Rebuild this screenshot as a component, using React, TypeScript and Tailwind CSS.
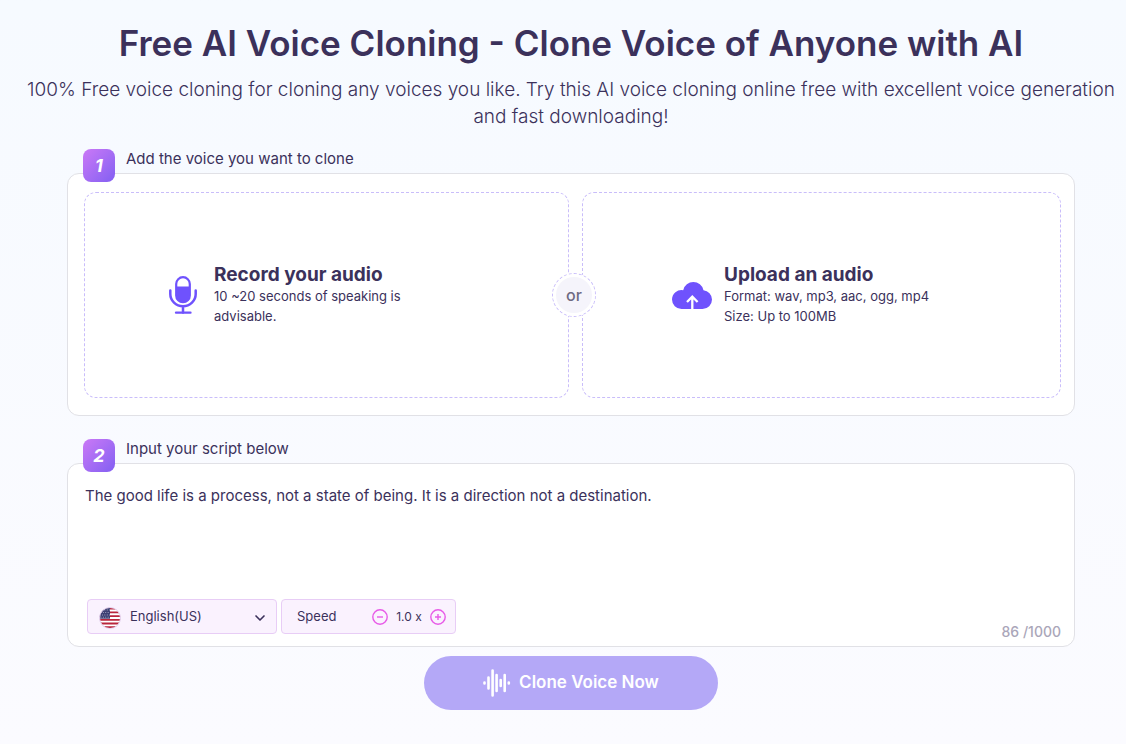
import { useState, type ReactNode } from 'react';
import { ChevronDown } from 'lucide-react';

const MAX_CHARS = 1000;

function MicIcon() {
  return (
    <svg viewBox="0 0 28 38" className="w-7 h-[38px] shrink-0" fill="none" stroke="#6f52fd" strokeLinecap="round">
      <rect x="7.2" y="1.2" width="13.6" height="25" rx="6.8" strokeWidth="2.2" />
      <path d="M7.2 10.5h13.600v8.900a6.800 6.800 0 0 1-13.600 0z" fill="#6f52fd" stroke="none" />
      <path d="M1.300 14.500V18a12.700 12.200 0 0 0 25.400 0v-3.500M14 30.500v6" strokeWidth="2.500" />
      <path d="M7 36.700h14.500" strokeWidth="2.300" />
    </svg>
  );
}

function CloudIcon() {
  return (
    <svg viewBox="0 0 40 32" className="w-10 h-8 shrink-0" fill="none">
      <path
        d="M9.500 30A9.500 9.500 0 0 1 0 20.500a9.500 9.500 0 0 1 11.200-9.300A10.400 10.400 0 0 1 31.500 11.200 9.500 9.500 0 0 1 40 20.500a9.500 9.500 0 0 1-9.500 9.500z"
        fill="#6f52fd"
      />
      <path d="M20.300 30V18.500M15 23l5.300-5.300 5.300 5.300" stroke="#fff" strokeWidth="2.300" />
    </svg>
  );
}

function WaveIcon() {
  return (
    <svg viewBox="0 0 28 28" className="w-7 h-7" stroke="currentColor" strokeWidth="2.600" strokeLinecap="round">
      <path d="M1.500 13.500v1M5.500 8.500v11M9.600 1.500v25M13.600 6v16M17.700 11v6M21.700 6v16M25.800 13.500v1" />
    </svg>
  );
}

function FlagIcon() {
  return (
    <svg viewBox="0 0 22 22" className="w-[22px] h-[22px]">
      <clipPath id="flag-circle">
        <circle cx="11" cy="11" r="10.500" />
      </clipPath>
      <g clipPath="url(#flag-circle)">
        <rect width="22" height="22" fill="#fff" />
        <path
          d="M0 1.700h22M0 5.400h22M0 9.100h22M0 12.800h22M0 16.500h22M0 20.200h22"
          stroke="#b9253c"
          strokeWidth="1.800"
        />
        <rect width="11" height="11.700" fill="#3d3f73" />
        <path
          d="M3 3h8M1.500 5.500h9M3 8h8M1.500 10.200h9"
          stroke="#c9cade"
          strokeWidth="0.800"
          strokeDasharray="0.900 1.500"
        />
      </g>
      <circle cx="11" cy="11" r="10.500" fill="none" stroke="#e3d3ef" />
    </svg>
  );
}

function StepHeader({ step, children }: { step: number; children: ReactNode }) {
  return (
    <div className="relative z-10 flex items-start gap-[11px] ml-4 -mb-[9px]">
      <span className="w-8 h-[33px] flex items-center justify-center rounded-lg bg-linear-to-br from-[#cb78f6] to-[#835ff2] text-white text-lg font-bold italic">
        {step}
      </span>
      {children}
    </div>
  );
}

function SourceButton({ icon, title, lines }: { icon: ReactNode; title: string; lines: string[] }) {
  return (
    <button
      type="button"
      className="h-[206px] flex items-center gap-[17px] rounded-xl border border-dashed border-[#c9bdfa] text-left cursor-pointer"
    >
      {icon}
      <span className="flex flex-col">
        <span className="text-[19px] leading-[22px] font-bold">{title}</span>
        {lines.map((line) => (
          <span key={line} className="text-[13px] leading-5">
            {line}
          </span>
        ))}
      </span>
    </button>
  );
}

function SpeedButton({ label, path, onClick }: { label: string; path: string; onClick: () => void }) {
  return (
    <button type="button" aria-label={label} onClick={onClick} className="text-[#e85be8] cursor-pointer">
      <svg viewBox="0 0 16 16" className="w-4 h-4" fill="none" stroke="currentColor" strokeWidth="1.400">
        <circle cx="8" cy="8" r="7.200" />
        <path d={path} />
      </svg>
    </button>
  );
}

export default function App() {
  const [script, setScript] = useState(
    'The good life is a process, not a state of being. It is a direction not a destination.'
  );
  const [speed, setSpeed] = useState(1);

  return (
    <main className="min-h-screen pl-4 pt-4 pb-8 bg-linear-to-b from-[#f6faff] to-[#fbfbff] font-['Inter',sans-serif] text-[#3b315b]">
      <header className="px-2 text-center">
        <h1 className="text-[35px] leading-[54px] font-semibold">
          Free AI Voice Cloning - Clone Voice of Anyone with AI
        </h1>
        <p className="mt-[6px] text-[19px] leading-[27px] font-light">
          100% Free voice cloning for cloning any voices you like. Try this AI voice cloning online free with excellent
          voice generation and fast downloading!
        </p>
      </header>

      <div className="mx-[51px] mt-[19px]">
        <section>
          <StepHeader step={1}>
            <h2 className="text-[15px] leading-5">Add the voice you want to clone</h2>
          </StepHeader>
          <div className="relative grid grid-cols-[485fr_479fr] gap-[13px] pt-[18px] pb-[17px] pl-4 pr-[13px] bg-white border border-[#e1e1e6] rounded-xl">
            <div className="grid *:pl-[84px]">
              <SourceButton
                icon={<MicIcon />}
                title="Record your audio"
                lines={['10 ~20 seconds of speaking is', 'advisable.']}
              />
            </div>
            <div className="grid *:pl-[89px] *:gap-3">
              <SourceButton
                icon={<CloudIcon />}
                title="Upload an audio"
                lines={['Format: wav, mp3, aac, ogg, mp4', 'Size: Up to 100MB']}
              />
            </div>
            <span className="absolute left-1/2 top-1/2 ml-[3px] -translate-x-1/2 -translate-y-1/2 w-11 h-11 p-[3px] rounded-full border border-dashed border-[#c9bdfa] bg-white">
              <span className="w-full h-full flex items-center justify-center rounded-full bg-[#f5f4fb] text-[#6f6a83] text-base font-medium">
                or
              </span>
            </span>
          </div>
        </section>

        <section className="mt-[23px]">
          <StepHeader step={2}>
            <label htmlFor="script" className="text-[15px] leading-5">
              Input your script below
            </label>
          </StepHeader>
          <div className="pt-[22px] pb-3 pl-[17px] pr-[13px] bg-white border border-[#e1e1e6] rounded-xl">
            <textarea
              id="script"
              value={script}
              maxLength={MAX_CHARS}
              onChange={(e) => setScript(e.target.value)}
              className="block w-full h-[113px] resize-none outline-none text-[15px] leading-5"
            />
            <div className="flex gap-1 pl-[2px]">
              <div className="relative">
                <select
                  aria-label="Language"
                  className="w-[190px] h-[35px] pl-[42px] appearance-none rounded-sm border border-[#e8cdf6] bg-[#faf2fe] text-[13px]"
                >
                  <option>English(US)</option>
                </select>
                <span className="absolute left-3 top-2 pointer-events-none">
                  <FlagIcon />
                </span>
                <ChevronDown className="absolute right-[9px] top-[11px] w-4 h-4 pointer-events-none" strokeWidth={2.5} />
              </div>
              <div className="w-[175px] h-[35px] flex items-center pl-[15px] pr-[9px] rounded-sm border border-[#e8cdf6] bg-[#faf2fe] text-[13px]">
                <span className="mr-auto">Speed</span>
                <SpeedButton
                  label="Slower"
                  path="M5 8h6"
                  onClick={() => setSpeed((s) => Math.max(0.5, s - 0.1))}
                />
                <span className="w-[42px] text-center text-xs">{speed.toFixed(1)} x</span>
                <SpeedButton
                  label="Faster"
                  path="M5 8h6M8 5v6"
                  onClick={() => setSpeed((s) => Math.min(2, s + 0.1))}
                />
              </div>
              <span className="ml-auto -mb-2 self-end text-sm leading-5 font-medium text-[#aaa6b9]">
                {script.length} /{MAX_CHARS}
              </span>
            </div>
          </div>
        </section>

        <button
          type="button"
          className="mx-auto mt-[9px] w-[294px] h-[54px] flex items-center justify-center gap-2 rounded-full bg-[#b4a8f7] text-white text-[17px] font-semibold cursor-pointer"
        >
          <WaveIcon />
          Clone Voice Now
        </button>
      </div>
    </main>
  );
}
